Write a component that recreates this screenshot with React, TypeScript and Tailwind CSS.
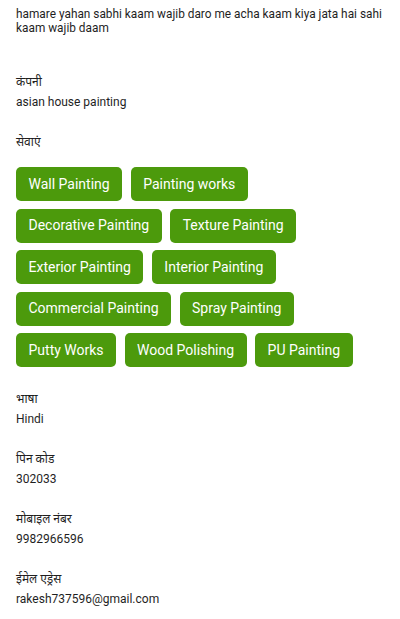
import React from 'react';

const SERVICES = [
  'Wall Painting',
  'Painting works',
  'Decorative Painting',
  'Texture Painting',
  'Exterior Painting',
  'Interior Painting',
  'Commercial Painting',
  'Spray Painting',
  'Putty Works',
  'Wood Polishing',
  'PU Painting',
];

const INFO = [
  { label: 'भाषा', value: 'Hindi' },
  { label: 'पिन कोड', value: '302033' },
  { label: 'मोबाइल नंबर', value: '9982966596' },
  { label: 'ईमेल एड्रेस', value: 'rakesh737596@gmail.com' },
];

function Field({ label, value }: { label: string; value: string }) {
  return (
    <div className="flex flex-col">
      <span className="text-[12px] leading-[20px] text-[#1f1f1f]">{label}</span>
      <span className="text-[12px] leading-[20px] text-[#1f1f1f]">{value}</span>
    </div>
  );
}

export default function App() {
  return (
    <div
      className="w-[400px] min-h-[619px] bg-white px-4 pt-[7px] text-[#1f1f1f]"
      style={{ fontFamily: "Roboto, 'Noto Sans', sans-serif" }}
    >
      <p className="text-[11.85px] leading-[14px] -mr-1">
        hamare yahan sabhi kaam wajib daro me acha kaam kiya jata hai sahi kaam wajib daam
      </p>

      <div className="mt-[37px]">
        <Field label="कंपनी" value="asian house painting" />
      </div>

      <div className="mt-5">
        <span className="block text-[12px] leading-[20px]">सेवाएं</span>
        <div className="mt-[15px] flex flex-wrap gap-x-[8.5px] gap-y-[7.5px]">
          {SERVICES.map(s => (
            <span
              key={s}
              className="h-[34px] px-[12.5px] flex items-center rounded-[5px] bg-[#4c9a0c] text-white text-[14px]"
            >
              {s}
            </span>
          ))}
        </div>
      </div>

      <div className="mt-[22px] flex flex-col gap-5">
        {INFO.map(f => (
          <Field key={f.label} label={f.label} value={f.value} />
        ))}
      </div>
    </div>
  );
}
